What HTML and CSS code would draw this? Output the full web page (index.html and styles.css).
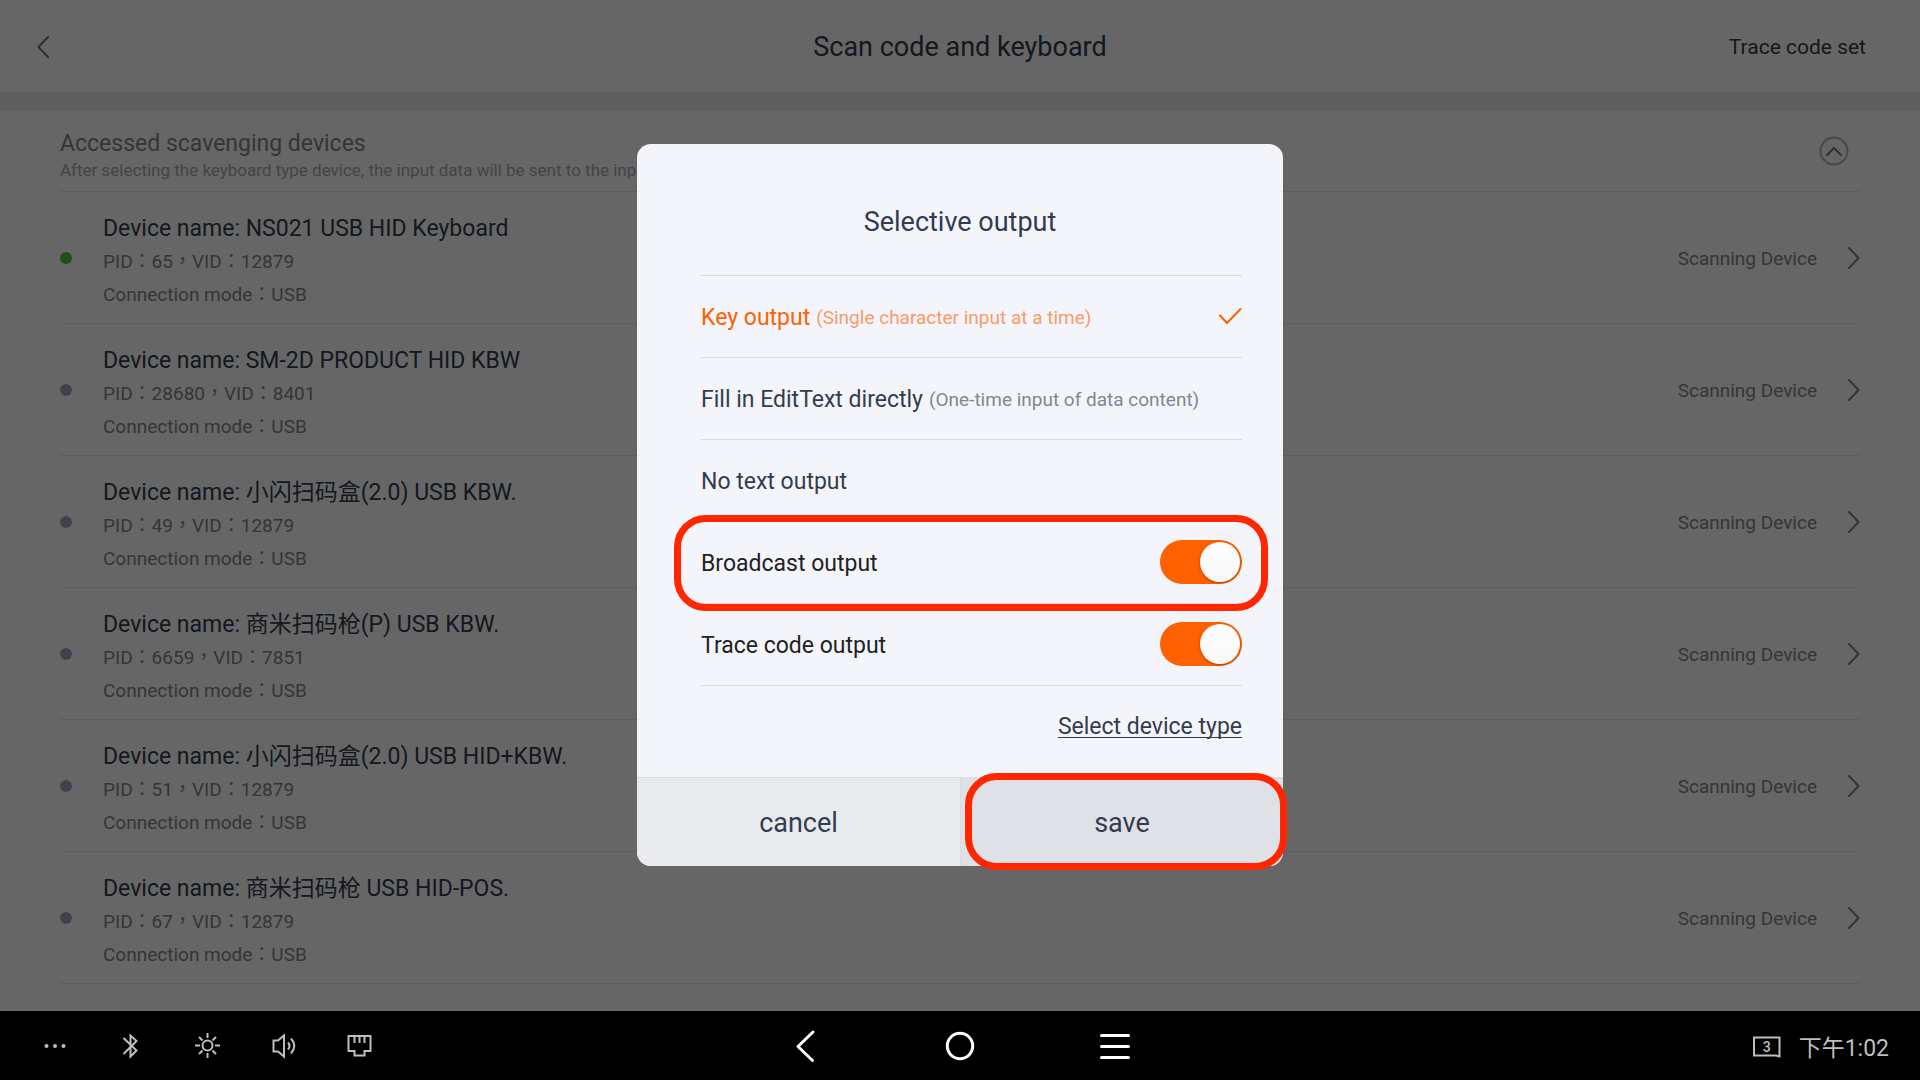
FILE: index.html
```html
<!DOCTYPE html>
<html lang="en">
<head>
<meta charset="utf-8">
<meta name="viewport" content="width=device-width, initial-scale=1">
<title>Scan code and keyboard</title>
<link rel="stylesheet" href="styles.css">
</head>
<body>
<div class="screen">
  <header class="topbar">
    <button class="icon-button topbar-back" type="button" aria-label="Back">
      <svg width="12" height="22" viewBox="0 0 12 22"><path d="M11 1 1.500 11 11 21"/></svg>
    </button>
    <h1 class="topbar-title">Scan code and keyboard</h1>
    <a class="topbar-link" href="#trace">Trace code set</a>
  </header>
  <main class="devices">
    <div class="section-head">
      <div class="section-text">
        <h2 class="section-title">Accessed scavenging devices</h2>
        <p class="section-note">After selecting the keyboard type device, the input data will be sent to the input box</p>
      </div>
      <button class="icon-button collapse" type="button" aria-label="Collapse">
        <svg width="30" height="30" viewBox="0 0 30 30"><circle cx="15" cy="15" r="13.500"/><path class="strong" d="m8 19 7-7 7 7"/></svg>
      </button>
    </div>
    <ul class="device-list">
      <li class="device">
        <span class="dot dot-on"></span>
        <div class="device-info">
          <h3 class="device-name">Device name: NS021 USB HID Keyboard</h3>
          <p class="device-meta">PID：65，VID：12879</p>
          <p class="device-meta">Connection mode：USB</p>
        </div>
        <span class="device-type">Scanning Device</span>
        <svg class="chevron" width="12" height="22" viewBox="0 0 12 22"><path d="m1 1 9.500 10L1 21"/></svg>
      </li>
      <li class="device">
        <span class="dot"></span>
        <div class="device-info">
          <h3 class="device-name">Device name: SM-2D PRODUCT HID KBW</h3>
          <p class="device-meta">PID：28680，VID：8401</p>
          <p class="device-meta">Connection mode：USB</p>
        </div>
        <span class="device-type">Scanning Device</span>
        <svg class="chevron" width="12" height="22" viewBox="0 0 12 22"><path d="m1 1 9.500 10L1 21"/></svg>
      </li>
      <li class="device">
        <span class="dot"></span>
        <div class="device-info">
          <h3 class="device-name">Device name: 小闪扫码盒(2.0) USB KBW.</h3>
          <p class="device-meta">PID：49，VID：12879</p>
          <p class="device-meta">Connection mode：USB</p>
        </div>
        <span class="device-type">Scanning Device</span>
        <svg class="chevron" width="12" height="22" viewBox="0 0 12 22"><path d="m1 1 9.500 10L1 21"/></svg>
      </li>
      <li class="device">
        <span class="dot"></span>
        <div class="device-info">
          <h3 class="device-name">Device name: 商米扫码枪(P) USB KBW.</h3>
          <p class="device-meta">PID：6659，VID：7851</p>
          <p class="device-meta">Connection mode：USB</p>
        </div>
        <span class="device-type">Scanning Device</span>
        <svg class="chevron" width="12" height="22" viewBox="0 0 12 22"><path d="m1 1 9.500 10L1 21"/></svg>
      </li>
      <li class="device">
        <span class="dot"></span>
        <div class="device-info">
          <h3 class="device-name">Device name: 小闪扫码盒(2.0) USB HID+KBW.</h3>
          <p class="device-meta">PID：51，VID：12879</p>
          <p class="device-meta">Connection mode：USB</p>
        </div>
        <span class="device-type">Scanning Device</span>
        <svg class="chevron" width="12" height="22" viewBox="0 0 12 22"><path d="m1 1 9.500 10L1 21"/></svg>
      </li>
      <li class="device">
        <span class="dot"></span>
        <div class="device-info">
          <h3 class="device-name">Device name: 商米扫码枪 USB HID-POS.</h3>
          <p class="device-meta">PID：67，VID：12879</p>
          <p class="device-meta">Connection mode：USB</p>
        </div>
        <span class="device-type">Scanning Device</span>
        <svg class="chevron" width="12" height="22" viewBox="0 0 12 22"><path d="m1 1 9.500 10L1 21"/></svg>
      </li>
    </ul>
  </main>

  <div class="scrim">
    <form class="dialog" role="dialog" aria-labelledby="dialog-title">
      <div class="dialog-body">
        <h2 class="dialog-title" id="dialog-title">Selective output</h2>
        <label class="row option">
          <input class="option-input" type="radio" name="output" value="key" checked>
          <span class="row-text">Key output</span>
          <span class="row-text option-hint">(Single character input at a time)</span>
          <svg class="option-check" width="24" height="18" viewBox="0 0 24 18"><path d="m2 8.500 7 7.500L22.500 2"/></svg>
        </label>
        <label class="row option">
          <input class="option-input" type="radio" name="output" value="fill">
          <span class="row-text">Fill in EditText directly</span>
          <span class="row-text option-hint">(One-time input of data content)</span>
          <svg class="option-check" width="24" height="18" viewBox="0 0 24 18"><path d="m2 8.500 7 7.500L22.500 2"/></svg>
        </label>
        <label class="row option">
          <input class="option-input" type="radio" name="output" value="none">
          <span class="row-text">No text output</span>
          <svg class="option-check" width="24" height="18" viewBox="0 0 24 18"><path d="m2 8.500 7 7.500L22.500 2"/></svg>
        </label>
        <div class="row setting marked marked-row">
          <label class="row-text" for="broadcast">Broadcast output</label>
          <input class="toggle" type="checkbox" id="broadcast" checked>
        </div>
        <div class="row setting">
          <label class="row-text" for="trace-output">Trace code output</label>
          <input class="toggle" type="checkbox" id="trace-output" checked>
        </div>
        <div class="device-type-row">
          <a class="device-type-link" href="#device-type">Select device type</a>
        </div>
      </div>
      <div class="dialog-actions">
        <button class="action" type="button">cancel</button>
        <button class="action action-save marked marked-save" type="button">save</button>
      </div>
    </form>
  </div>
</div>

<nav class="navbar">
  <div class="nav-tools">
    <button class="icon-button" type="button" aria-label="More">
      <svg width="26" height="26" viewBox="0 0 26 26"><g class="solid"><circle cx="4.500" cy="13" r="2"/><circle cx="13" cy="13" r="2"/><circle cx="21.500" cy="13" r="2"/></g></svg>
    </button>
    <button class="icon-button" type="button" aria-label="Bluetooth">
      <svg width="26" height="26" viewBox="0 0 26 26"><path d="M5.500 5 18.500 17.500 12.500 23.500V2.500L18.500 8 5.500 21"/></svg>
    </button>
    <button class="icon-button" type="button" aria-label="Brightness">
      <svg width="26" height="26" viewBox="0 0 26 26"><circle cx="13.500" cy="12.500" r="5"/><path d="M13.500 0v5M13.500 20v5M1 12.500h5M21 12.500h5M5 4l3.500 3.500M18.500 17.500l3.500 3.500M22 4l-3.500 3.500M8.500 17.500 5 21"/></svg>
    </button>
    <button class="icon-button" type="button" aria-label="Volume">
      <svg width="26" height="26" viewBox="0 0 26 26"><path d="M3.500 7.500H8L14 2.500v21L8 18.500H3.500zM18 9.500q3 3.500 0 7M21 5.500q6.500 7.500 0 15"/></svg>
    </button>
    <button class="icon-button" type="button" aria-label="Ethernet">
      <svg width="26" height="26" viewBox="0 0 26 26"><path d="M2.500 3h22v15h-6v4.500h-10V18h-6zM8.500 3v7M13.500 3v7M18.500 3v7"/></svg>
    </button>
  </div>
  <div class="nav-main">
    <button class="icon-button" type="button" aria-label="Back">
      <svg width="34" height="34" viewBox="0 0 34 34"><path d="M25 3 10 17.500 24.500 31.500"/></svg>
    </button>
    <button class="icon-button" type="button" aria-label="Home">
      <svg width="34" height="34" viewBox="0 0 34 34"><circle cx="17" cy="17" r="12.700"/></svg>
    </button>
    <button class="icon-button" type="button" aria-label="Menu">
      <svg width="34" height="34" viewBox="0 0 34 34"><path d="M3.500 6.500h27M3.500 17.500h27M3.500 28.500h27"/></svg>
    </button>
  </div>
  <div class="nav-status">
    <span class="badge">3<svg class="badge-frame" width="28" height="22" viewBox="0 0 28 22"><path d="M1 1.500h25.500V20.500L23 19.500H1z"/></svg></span>
    <time class="clock" datetime="13:02">下午1:02</time>
  </div>
</nav>
</body>
</html>
```
FILE: styles.css
```css
:root {
  --ink: #333c4f;
  --ink-soft: #85858f;
  --line: #e8e8e8;
  --orange: #ff6000;
  --mark: #ff2600;
}

* {
  box-sizing: border-box;
}

body {
  margin: 0;
  min-height: 100vh;
  display: flex;
  flex-direction: column;
  font-family: Roboto, "Noto Sans CJK SC", sans-serif;
  font-size: 23px;
  color: var(--ink);
  background: #fff;
}

h1, h2, h3, p, ul {
  margin: 0;
  padding: 0;
  font-weight: 400;
}

button, input {
  font: inherit;
  color: inherit;
  margin: 0;
}

svg {
  display: block;
  fill: none;
  stroke: currentColor;
  stroke-width: 2;
  stroke-linecap: round;
  stroke-linejoin: round;
}

.icon-button {
  display: flex;
  align-items: center;
  justify-content: center;
  padding: 0;
  border: 0;
  background: none;
}

.screen {
  position: relative;
  flex: 1;
  display: flex;
  flex-direction: column;
}

/* Top bar */
.topbar {
  display: grid;
  grid-template-columns: 1fr auto 1fr;
  align-items: center;
  height: 111px;
  padding: 2px 54px 0 37px;
  border-bottom: 19px solid #eee;
}

.topbar-back {
  justify-self: start;
  color: #77777f;
}

.topbar-title {
  font-size: 27px;
  line-height: 36px;
  /* evens out the unequal side padding of the bar */
  margin-left: 17px;
}

.topbar-link {
  justify-self: end;
  font-size: 21px;
  color: inherit;
  text-decoration: none;
}

/* Device list */
.devices {
  padding: 0 60px;
}

.section-head {
  display: flex;
  align-items: center;
  justify-content: space-between;
  padding-right: 11px;
  border-bottom: 1px solid var(--line);
}

.section-text {
  padding: 19px 0 8px;
}

.section-title {
  font-size: 23px;
  line-height: 28px;
  color: var(--ink-soft);
}

.section-note {
  font-size: 17px;
  line-height: 25px;
  color: #aaaab2;
}

.collapse {
  color: #b4b4bc;
}

.collapse .strong {
  stroke: #77777f;
}

.device-list {
  list-style: none;
}

.device {
  display: flex;
  align-items: center;
  border-bottom: 1px solid var(--line);
}

.dot {
  width: 12px;
  height: 12px;
  border-radius: 50%;
  background: #9ca6ba;
}

.dot-on {
  background: #5cc436;
}

.device-info {
  flex: 1;
  padding: 20px 0 12px;
  margin-left: 31px;
}

.device-name {
  font-size: 23px;
  line-height: 33px;
}

.device-meta {
  font-family: Roboto, "Noto Sans CJK TC", sans-serif;
  font-size: 19px;
  line-height: 33px;
  color: var(--ink-soft);
}

.device-type {
  padding-top: 2px;
  font-size: 19px;
  color: var(--ink-soft);
}

.chevron {
  margin-left: 31px;
  color: #85858f;
}

/* Dialog */
.scrim {
  position: absolute;
  inset: 0;
  display: flex;
  align-items: center;
  justify-content: center;
  padding-bottom: 1px;
  background: rgba(0, 0, 0, 0.6);
}

.dialog {
  width: 646px;
  max-width: 100%;
  border-radius: 14px;
  background: #f4f5fa;
}

.dialog-body {
  padding: 0 41px 0 64px;
}

.dialog-title {
  padding: 60px 23px 35px 0;
  font-size: 27px;
  line-height: 36px;
  text-align: center;
}

.row {
  display: flex;
  align-items: center;
  height: 82px;
  padding-bottom: 2px;
  border-top: 1px solid #dadce2;
}

.row-text {
  padding-top: 4px;
}

.option {
  gap: 6px;
  white-space: nowrap;
}

.option-input {
  appearance: none;
  position: absolute;
}

.option-hint {
  font-size: 19px;
  opacity: 0.6;
}

.option-check {
  flex: none;
  margin-left: auto;
  visibility: hidden;
}

.option:has(:checked) {
  color: var(--orange);
}

.option-input:checked ~ .option-check {
  visibility: visible;
}

.setting {
  justify-content: space-between;
  color: #222;
}

.toggle {
  appearance: none;
  display: flex;
  justify-content: flex-end;
  width: 82px;
  height: 44px;
  padding: 2px;
  border-radius: 22px;
  background: var(--orange);
}

.toggle::before {
  content: "";
  width: 40px;
  height: 40px;
  border-radius: 50%;
  background: linear-gradient(#fff, #f7f7f7);
  box-shadow: 0 1px 3px rgba(0, 0, 0, 0.35);
}

.device-type-row {
  display: flex;
  align-items: center;
  justify-content: flex-end;
  height: 92px;
  padding-bottom: 10px;
  border-top: 1px solid #dadce2;
}

.device-type-link {
  color: inherit;
  text-decoration-thickness: 1px;
  text-underline-offset: 3px;
  text-decoration-skip-ink: none;
}

.dialog-actions {
  display: grid;
  grid-template-columns: 1fr 1fr;
  border-top: 1px solid #dadce0;
}

.action {
  height: 88px;
  padding: 2px 0 0;
  border: 0;
  border-radius: 0 0 0 14px;
  font-size: 27px;
  background: #e9eaee;
}

.action-save {
  border-left: 1px solid #dadce2;
  border-radius: 0 0 14px 0;
  background: #e0e1e6;
}

/* Highlight frames */
.marked {
  position: relative;
}

.marked::after {
  content: "";
  position: absolute;
  border: 7px solid var(--mark);
  border-radius: 32px;
  pointer-events: none;
}

.marked-row::after {
  inset: -7px -26px -8px -27px;
}

.marked-save::after {
  inset: -5px -4px -4px 4px;
}

/* System bar */
.navbar {
  display: grid;
  grid-template-columns: 1fr auto 1fr;
  align-items: center;
  height: 69px;
  background: #000;
  color: #bebebe;
}

.nav-tools {
  display: flex;
  padding-left: 17px;
}

.nav-tools .icon-button {
  width: 76px;
  height: 69px;
}

.nav-tools svg {
  stroke-linecap: butt;
  stroke-linejoin: miter;
}

.solid {
  fill: currentColor;
  stroke: none;
}

.nav-main {
  display: flex;
  color: #fff;
}

.nav-main .icon-button {
  width: 155px;
  height: 69px;
}

.nav-main svg {
  stroke-width: 3;
}

.nav-status {
  display: flex;
  align-items: center;
  justify-content: flex-end;
  gap: 18px;
  padding-right: 31px;
}

.badge {
  position: relative;
  width: 28px;
  margin-top: 2px;
  font-size: 14px;
  line-height: 22px;
  font-weight: 500;
  text-align: center;
}

.badge-frame {
  position: absolute;
  inset: 0;
  stroke-linejoin: miter;
}

.clock {
  font-size: 23px;
}
```
